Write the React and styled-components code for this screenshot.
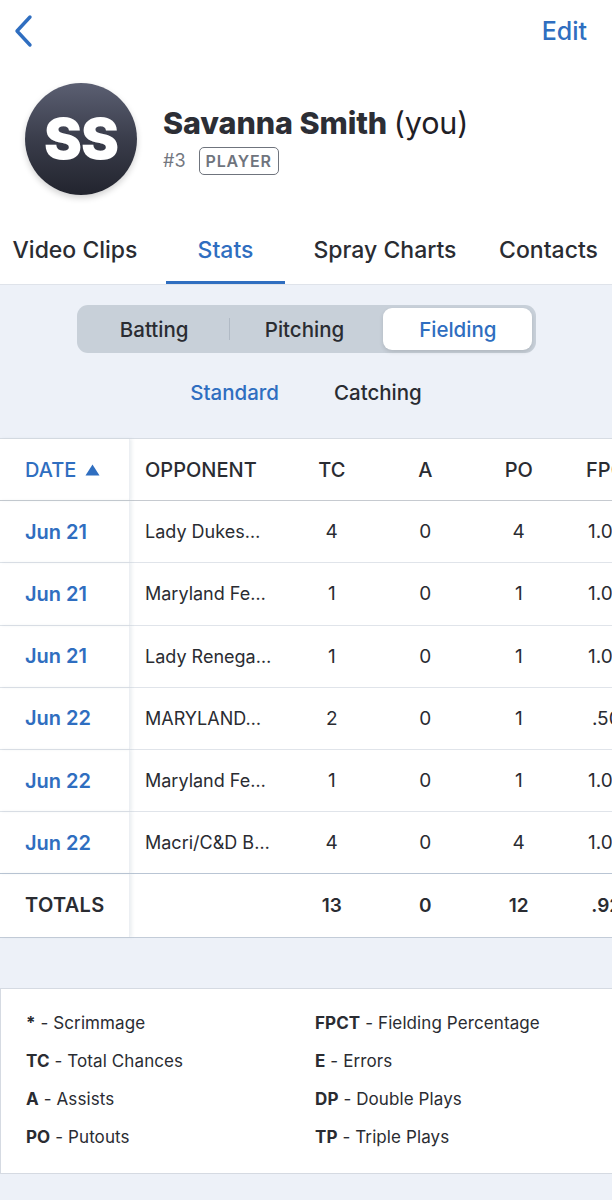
import React from "react";
import styled, { createGlobalStyle } from "styled-components";

const Global = createGlobalStyle`
  html, body { margin: 0; padding: 0; background: #ffffff; }
  body { font-family: Inter, "Noto Sans", "Liberation Sans", sans-serif; color: #2a2c32; -webkit-font-smoothing: antialiased; }
  * { box-sizing: border-box; }
`;

const BLUE = "#2f6ec0";
const DARK = "#2a2c32";

const Page = styled.div`
  width: 612px;
  min-height: 1200px;
  background: #edf1f8;
  overflow: hidden;
`;

const Top = styled.div`
  background: #fff;
`;

const NavBar = styled.div`
  height: 62px;
  display: flex;
  align-items: center;
  justify-content: space-between;
  padding: 0 25px 0 12px;
`;

const BackButton = styled.button`
  border: 0;
  background: none;
  padding: 0;
  display: flex;
  align-items: center;
  cursor: pointer;
`;

const EditButton = styled.button`
  border: 0;
  background: none;
  padding: 0;
  font-family: inherit;
  font-size: 25px;
  font-weight: 500;
  color: ${BLUE};
  cursor: pointer;
`;

const Profile = styled.div`
  display: flex;
  align-items: center;
  padding: 21px 0 0 25px;
  gap: 26px;
`;

const Avatar = styled.div`
  width: 112px;
  height: 112px;
  border-radius: 50%;
  background: linear-gradient(180deg, #5b5f72 0%, #3a3d4b 50%, #22242e 100%);
  box-shadow: 0 3px 6px rgba(0, 0, 0, 0.18);
  display: flex;
  align-items: center;
  justify-content: center;
  color: #fff;
  font-size: 57px;
  font-weight: 900;
  letter-spacing: -1px;
  padding-bottom: 2px;
`;

const Info = styled.div`
  display: flex;
  flex-direction: column;
  gap: 6px;
`;

const Name = styled.div`
  font-size: 30.5px;
  font-weight: 800;
  color: #2c2e35;
  letter-spacing: -0.1px;
  white-space: nowrap;
`;

const You = styled.span`
  font-weight: 400;
  color: #1f2026;
`;

const Meta = styled.div`
  display: flex;
  align-items: center;
  gap: 13px;
`;

const Number = styled.span`
  font-size: 18px;
  color: #737780;
`;

const Badge = styled.span`
  border: 1.5px solid #6f747d;
  border-radius: 5px;
  padding: 3px 6px;
  font-size: 16px;
  font-weight: 600;
  color: #6f747d;
  letter-spacing: 0.8px;
  line-height: 20px;
`;

const Tabs = styled.div`
  display: flex;
  margin-top: 20px;
  border-bottom: 1px solid #dfe3ea;
`;

const Tab = styled.div`
  height: 69px;
  flex: 0 0 ${(p) => p.$w}px;
  margin-left: ${(p) => p.$gap || 0}px;
  display: flex;
  align-items: center;
  justify-content: center;
  font-size: 23px;
  font-weight: 500;
  color: ${(p) => (p.$active ? BLUE : DARK)};
  border-bottom: 3px solid ${(p) => (p.$active ? BLUE : "transparent")};
  padding-top: 3px;
  white-space: nowrap;
`;

const Filters = styled.div`
  display: flex;
  flex-direction: column;
  align-items: center;
  padding: 20px 0 26px;
`;

const Segmented = styled.div`
  width: 459px;
  height: 48px;
  background: #c8d0d9;
  border-radius: 11px;
  padding: 3px;
  display: flex;
  align-items: stretch;
`;

const Segment = styled.div`
  flex: 1;
  display: flex;
  align-items: center;
  justify-content: center;
  font-size: 20.5px;
  font-weight: 500;
  border-radius: 9px;
  color: ${(p) => (p.$active ? BLUE : DARK)};
  background: ${(p) => (p.$active ? "#fff" : "transparent")};
  box-shadow: ${(p) => (p.$active ? "0 2px 4px rgba(0,0,0,0.12)" : "none")};
  margin-left: ${(p) => (p.$active ? 4 : 0)}px;
`;

const SegDivider = styled.div`
  width: 1px;
  margin: 10px 0;
  background: #b1bac5;
`;

const SubTabs = styled.div`
  display: flex;
  gap: 55px;
  margin-top: 19px;
  height: 40px;
  align-items: center;
`;

const SubTab = styled.div`
  font-size: 20.5px;
  font-weight: 500;
  color: ${(p) => (p.$active ? BLUE : DARK)};
`;

const Table = styled.div`
  background: #fff;
  border-top: 1px solid #d7dce3;
  border-bottom: 1px solid #c3ccd8;
`;

const Row = styled.div`
  display: flex;
  height: 62.2px;
  align-items: stretch;
  border-bottom: 1px solid ${(p) => (p.$head ? "#c6cad0" : p.$beforeTotal ? "#b9c5d4" : "#e0e4ea")};
  &:last-child { border-bottom: 0; }
`;

const DateCell = styled.div`
  flex: 0 0 130px;
  display: flex;
  align-items: center;
  gap: 9px;
  padding-left: 25px;
  border-right: 1px solid #eceff3;
  box-shadow: 2px 0 3px rgba(180, 190, 205, 0.25);
  font-size: ${(p) => (p.$head ? 20 : 20)}px;
  font-weight: ${(p) => (p.$totals ? 600 : p.$head ? 500 : 600)};
  color: ${(p) => (p.$totals ? DARK : BLUE)};
  letter-spacing: ${(p) => (p.$totals ? "0.3px" : "0")};
`;

const OppCell = styled.div`
  flex: 0 0 155px;
  display: flex;
  align-items: center;
  padding-left: 15px;
  font-size: ${(p) => (p.$head ? 20 : 18)}px;
  font-weight: ${(p) => (p.$head ? 500 : 400)};
  color: ${DARK};
  white-space: nowrap;
  overflow: hidden;
`;

const NumCell = styled.div`
  flex: 0 0 93.5px;
  display: flex;
  align-items: center;
  justify-content: center;
  font-size: ${(p) => (p.$head ? 20 : 19)}px;
  font-weight: ${(p) => (p.$bold ? 600 : p.$head ? 500 : 400)};
  color: ${DARK};
  white-space: nowrap;
`;

const Legend = styled.div`
  margin-top: 50px;
  background: #fff;
  border-top: 1px solid #d5dae2;
  border-bottom: 1px solid #d5dae2;
  border-left: 1px solid #d5dae2;
  padding: 15px 0 17px 25px;
  display: grid;
  grid-template-columns: 289px 1fr;
  grid-auto-rows: 38px;
  align-items: center;
`;

const LegendItem = styled.div`
  font-size: 17px;
  color: ${DARK};
  white-space: nowrap;
  letter-spacing: 0.1px;
  b { font-weight: 700; }
`;

const Triangle = () => (
  <svg width="15" height="12" viewBox="0 0 15 12">
    <path d="M7.5 0.5 L14.5 11.5 L0.5 11.5 Z" fill={BLUE} />
  </svg>
);

const rows = [
  ["Jun 21", "Lady Dukes…", 4, 0, 4, "1.000"],
  ["Jun 21", "Maryland Fe…", 1, 0, 1, "1.000"],
  ["Jun 21", "Lady Renega…", 1, 0, 1, "1.000"],
  ["Jun 22", "MARYLAND…", 2, 0, 1, ".500"],
  ["Jun 22", "Maryland Fe…", 1, 0, 1, "1.000"],
  ["Jun 22", "Macri/C&D B…", 4, 0, 4, "1.000"],
];

const legend = [
  ["*", "Scrimmage"],
  ["FPCT", "Fielding Percentage"],
  ["TC", "Total Chances"],
  ["E", "Errors"],
  ["A", "Assists"],
  ["DP", "Double Plays"],
  ["PO", "Putouts"],
  ["TP", "Triple Plays"],
];

export default function App() {
  return (
    <Page>
      <Global />
      <Top>
        <NavBar>
          <BackButton aria-label="Back">
            <svg width="24" height="34" viewBox="0 0 24 34">
              <path d="M18 3 L5 17 L18 31" fill="none" stroke={BLUE} strokeWidth="3.4" strokeLinecap="round" strokeLinejoin="round" />
            </svg>
          </BackButton>
          <EditButton>Edit</EditButton>
        </NavBar>
        <Profile>
          <Avatar>SS</Avatar>
          <Info>
            <Name>
              Savanna Smith <You>(you)</You>
            </Name>
            <Meta>
              <Number>#3</Number>
              <Badge>PLAYER</Badge>
            </Meta>
          </Info>
        </Profile>
        <Tabs>
          <Tab $w={150}>Video Clips</Tab>
          <Tab $w={119} $gap={16} $active>Stats</Tab>
          <Tab $w={200}>Spray Charts</Tab>
          <Tab $w={127}>Contacts</Tab>
        </Tabs>
      </Top>
      <Filters>
        <Segmented>
          <Segment>Batting</Segment>
          <SegDivider />
          <Segment>Pitching</Segment>
          <Segment $active>Fielding</Segment>
        </Segmented>
        <SubTabs>
          <SubTab $active>Standard</SubTab>
          <SubTab>Catching</SubTab>
        </SubTabs>
      </Filters>
      <Table>
        <Row $head>
          <DateCell $head>
            DATE <Triangle />
          </DateCell>
          <OppCell $head>OPPONENT</OppCell>
          <NumCell $head>TC</NumCell>
          <NumCell $head>A</NumCell>
          <NumCell $head>PO</NumCell>
          <NumCell $head>FPCT</NumCell>
        </Row>
        {rows.map((r, i) => (
          <Row key={i} $beforeTotal={i === rows.length - 1}>
            <DateCell>{r[0]}</DateCell>
            <OppCell>{r[1]}</OppCell>
            <NumCell>{r[2]}</NumCell>
            <NumCell>{r[3]}</NumCell>
            <NumCell>{r[4]}</NumCell>
            <NumCell>{r[5]}</NumCell>
          </Row>
        ))}
        <Row>
          <DateCell $totals>TOTALS</DateCell>
          <OppCell />
          <NumCell $bold>13</NumCell>
          <NumCell $bold>0</NumCell>
          <NumCell $bold>12</NumCell>
          <NumCell $bold>.923</NumCell>
        </Row>
      </Table>
      <Legend>
        {legend.map(([k, v]) => (
          <LegendItem key={k}>
            <b>{k}</b> - {v}
          </LegendItem>
        ))}
      </Legend>
    </Page>
  );
}
